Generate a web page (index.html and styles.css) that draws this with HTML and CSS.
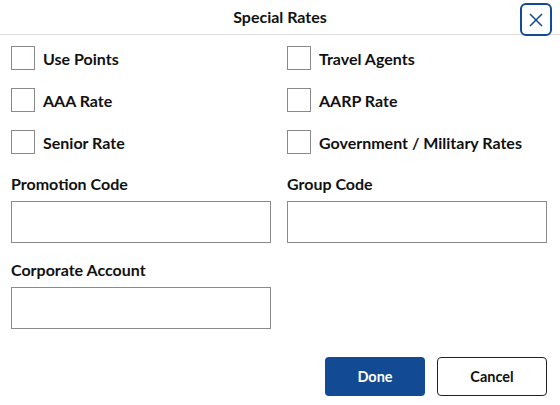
FILE: index.html
```html
<!DOCTYPE html>
<html>
<head>
<meta charset="utf-8">
<link rel="stylesheet" href="styles.css">
</head>
<body>
<div class="dialog">
  <div class="header">
    <div class="title">Special Rates</div>
    <button class="close" aria-label="Close">
      <svg width="14" height="14" viewBox="0 0 14 14"><path d="M1 1L13 13M13 1L1 13" stroke="#124a94" stroke-width="1.5" fill="none"/></svg>
    </button>
  </div>
  <div class="checks">
    <label class="check"><span class="box"></span>Use Points</label>
    <label class="check"><span class="box"></span>Travel Agents</label>
    <label class="check"><span class="box"></span>AAA Rate</label>
    <label class="check"><span class="box"></span>AARP Rate</label>
    <label class="check"><span class="box"></span>Senior Rate</label>
    <label class="check"><span class="box"></span>Government / Military Rates</label>
  </div>
  <div class="fields">
    <div class="field"><div class="flabel">Promotion Code</div><div class="input"></div></div>
    <div class="field"><div class="flabel">Group Code</div><div class="input"></div></div>
    <div class="field"><div class="flabel">Corporate Account</div><div class="input"></div></div>
  </div>
  <div class="actions">
    <button class="btn primary">Done</button>
    <button class="btn secondary">Cancel</button>
  </div>
</div>
</body>
</html>
```
FILE: styles.css
```css
* { box-sizing: border-box; }
html, body { margin: 0; padding: 0; background: #fff; }
body { font-family: "Lato", "Liberation Sans", sans-serif; color: #111; font-weight: 700; }
.dialog { width: 560px; height: 405px; padding: 0 13px 0 11px; }
.header {
  height: 35px; margin: 0 -13px 0 -11px; padding-top: 2px;
  display: flex; justify-content: center; position: relative;
  border-bottom: 1px solid #dedede;
}
.title { font-size: 16px; line-height: 30px; }
.close {
  position: absolute; right: 8px; top: 3px;
  width: 32px; height: 33px; border: 2px solid #124a94; border-radius: 6px;
  background: #fff; display: flex; align-items: center; justify-content: center; padding: 0;
}
.checks {
  display: grid; grid-template-columns: 276px 1fr; row-gap: 18px;
  margin-top: 11px;
}
.check { display: flex; align-items: center; gap: 8px; font-size: 16px; height: 24px; }
.box { width: 24px; height: 24px; border: 1px solid #8a8a8a; flex: none; }
.fields {
  display: grid; grid-template-columns: 260px 260px; column-gap: 16px; row-gap: 18px;
  margin-top: 21px;
}
.flabel { font-size: 16px; line-height: 18px; margin-bottom: 8px; }
.input { height: 42px; border: 1px solid #8a8a8a; }
.actions { display: flex; justify-content: flex-end; gap: 12px; margin-top: 28px; }
.btn {
  height: 39px; border-radius: 4px; font-family: inherit; font-weight: 700; font-size: 14.5px;
}
.primary { width: 100px; background: #124a94; color: #fff; border: none; }
.secondary { width: 110px; background: #fff; color: #111; border: 1px solid #222; }
```
